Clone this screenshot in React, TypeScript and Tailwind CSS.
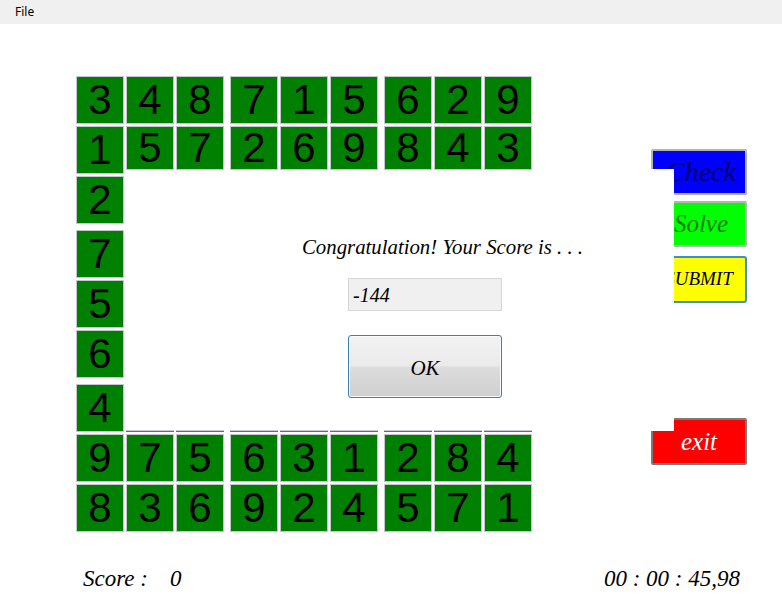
const rows: (number | null)[][] = [
  [3, 4, 8, 7, 1, 5, 6, 2, 9],
  [1, 5, 7, 2, 6, 9, 8, 4, 3],
  [2, null, null, null, null, null, null, null, null],
  [7, null, null, null, null, null, null, null, null],
  [5, null, null, null, null, null, null, null, null],
  [6, null, null, null, null, null, null, null, null],
  [4, null, null, null, null, null, null, null, null],
  [9, 7, 5, 6, 3, 1, 2, 8, 4],
  [8, 3, 6, 9, 2, 4, 5, 7, 1],
];

const script = { fontFamily: '"Liberation Serif", "DejaVu Serif", serif' };

const Cell = ({ value, row, col }: { value: number | null; row: number; col: number }) => {
  if (value === null) {
    if (row === 6) {
      return (
        <div className="flex h-12 w-12 flex-col justify-end">
          <div className="h-[2px] border-t border-[#c8c8d2] bg-[#3a8f3a]" />
        </div>
      );
    }
    return <div className="h-12 w-12" />;
  }
  const short = row === 1 && col > 0;
  return (
    <div
      className={`flex w-12 items-center justify-center self-start border border-[#c6c6d0] bg-[#008000] text-[42px] leading-none text-black ${
        short ? "h-[44px]" : "h-12"
      }`}
      style={{ fontFamily: '"Liberation Sans", Arial, sans-serif' }}
    >
      {value}
    </div>
  );
};

const Board = () => (
  <div className="flex flex-col gap-[6px]">
    {[0, 1, 2].map((band) => (
      <div key={band} className="flex flex-col gap-[2px]">
        {[0, 1, 2].map((r) => {
          const row = band * 3 + r;
          return (
            <div key={row} className="flex gap-[6px]">
              {[0, 1, 2].map((block) => (
                <div key={block} className="flex gap-[2px]">
                  {[0, 1, 2].map((c) => {
                    const col = block * 3 + c;
                    return <Cell key={col} value={rows[row][col]} row={row} col={col} />;
                  })}
                </div>
              ))}
            </div>
          );
        })}
      </div>
    ))}
  </div>
);

export default function App() {
  return (
    <div className="relative h-[603px] w-[782px] overflow-hidden bg-white">
      <div className="flex h-6 items-center bg-[#f0f0f0] pl-[15px] text-[12px] text-black" style={{ fontFamily: '"Noto Sans", "Open Sans", sans-serif' }}>
        File
      </div>

      <div className="flex pl-[76px] pt-[52px]">
        <Board />
        <div className="ml-[119px] flex w-[96px] flex-col pt-[73px]" style={script}>
          <button className="flex h-[46px] items-center justify-center rounded-[2px] border-2 border-[#b4b4b4] bg-[#0000ff] pl-1 text-[28px] italic text-[#000070]">
            Check
          </button>
          <button className="mt-[6px] flex h-[46px] items-center justify-center rounded-[2px] border-2 border-[#b4b4b4] bg-[#00ff00] pl-1 text-[25px] italic text-[#0a7d0a]">
            Solve
          </button>
          <button className="mt-[9px] flex h-[47px] items-center justify-center rounded-[3px] border-2 border-[#3d8fcc] bg-[#ffff00] text-[19px] italic text-black">
            SUBMIT
          </button>
          <button className="mt-[115px] flex h-[47px] items-center justify-center rounded-[2px] border-2 border-[#7a7a7a] bg-[#ff0000] text-[25px] italic text-white">
            exit
          </button>
        </div>
      </div>

      <div className="mt-[30px] flex items-center justify-between pl-[83px] pr-[42px] text-[23px] italic text-black" style={script}>
        <div className="flex gap-[22px]">
          <span>Score :</span>
          <span>0</span>
        </div>
        <span>00 : 00 : 45,98</span>
      </div>

      <div className="absolute left-[650px] top-[169px] h-[262px] w-[24px] bg-white" />

      <div className="absolute left-[300px] top-[234px] flex flex-col" style={script}>
        <div className="h-[26px] pl-[2px] text-[20.8px] italic leading-[26px] text-black">
          Congratulation! Your Score is . . .
        </div>
        <div className="ml-[48px] mt-[18px] flex h-[33px] w-[154px] items-center border border-[#d6d6d6] bg-[#f0f0f0] pl-[4px] text-[20px] italic text-black">
          -144
        </div>
        <button className="ml-[48px] mt-[24px] flex h-[63px] w-[154px] items-center justify-center rounded-[3px] border border-[#3c7fb1] bg-[linear-gradient(to_bottom,#f2f2f2_0%,#ebebeb_48%,#dddddd_52%,#cfcfcf_100%)] pt-[4px] text-[21px] italic text-black shadow-[inset_0_0_0_1px_#fafafa]">
          OK
        </button>
      </div>
    </div>
  );
}
